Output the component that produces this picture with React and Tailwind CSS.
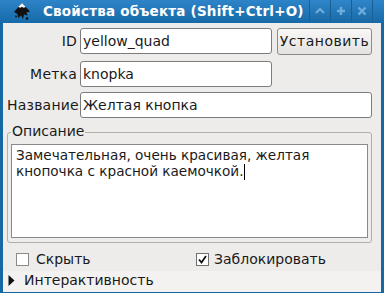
import React from "react";

const font = { fontFamily: '"DejaVu Sans", sans-serif' };

function Logo() {
  return (
    <svg width="18" height="19" viewBox="0 0 18 19">
      <path d="M9 1 L17 9.5 L13.5 10.5 L14.5 13.5 L11 12.5 L10 17 L8 13.5 L5 16 L4.5 12 L1 10 Z" fill="#111" />
      <path d="M9 1 L12.8 5 L10.5 5.8 L9 4.8 L7.5 5.8 L5.2 5 Z" fill="#f4f4f4" />
      <circle cx="14" cy="16.5" r="1.3" fill="#111" />
      <circle cx="3" cy="14.5" r="0.9" fill="#111" />
    </svg>
  );
}

function TitleButton({ children }) {
  return (
    <div className="w-[21px] h-[22px] flex items-center justify-center border-l border-[#1a5f94] bg-gradient-to-b from-[#2f86c8] to-[#1a6aa6]">
      {children}
    </div>
  );
}

export default function App() {
  return (
    <div className="w-[384px] h-[293px] bg-[#1668a3] flex flex-col text-[14px] text-[#1a1a1a]" style={font}>
      <div className="h-[23px] flex items-center bg-gradient-to-b from-[#2d84c8] to-[#166aa8] shrink-0">
        <div className="w-[43px] flex justify-center pl-[1px]">
          <Logo />
        </div>
        <div className="text-white font-bold text-[13.5px] tracking-[0.2px] flex-1">Свойства объекта (Shift+Ctrl+O)</div>
        <div className="flex self-start mr-[11px]">
          <TitleButton>
            <svg width="10" height="8" viewBox="0 0 10 8"><path d="M1 6 L5 2 L9 6" stroke="#6eacdc" strokeWidth="2.2" fill="none" /></svg>
          </TitleButton>
          <TitleButton>
            <svg width="10" height="10" viewBox="0 0 10 10"><path d="M5 1 V9 M1 5 H9" stroke="#6eacdc" strokeWidth="2.4" fill="none" /></svg>
          </TitleButton>
          <TitleButton>
            <svg width="10" height="10" viewBox="0 0 10 10"><path d="M1.5 1.5 L8.5 8.5 M8.5 1.5 L1.5 8.5" stroke="#6eacdc" strokeWidth="2.4" fill="none" /></svg>
          </TitleButton>
          <div className="w-px h-[22px] bg-[#1a5f94]" />
        </div>
      </div>
      <div className="flex-1 ml-[3px] mr-[3px] mb-[4px] bg-[#edeceb] flex flex-col">
        <div className="flex flex-col px-[4px] pt-[5px] flex-1">
          <div className="flex items-center h-[26px]">
            <div className="w-[73px] text-right pr-[3px] tracking-[0.2px]">ID</div>
            <div className="w-[192px] h-[26px] border border-[#7c7c7c] rounded-[3px] bg-white px-[2px] flex items-center">yellow_quad</div>
            <div className="ml-[5px] w-[95px] h-[27px] border border-[#8c8c8c] rounded-[3px] bg-gradient-to-b from-[#f9f8f7] to-[#e4e2e0] flex items-center justify-center tracking-[0.5px]">Установить</div>
          </div>
          <div className="flex items-center h-[26px] mt-[7px]">
            <div className="w-[73px] text-right pr-[3px] tracking-[0.2px]">Метка</div>
            <div className="w-[192px] h-[26px] border border-[#7c7c7c] rounded-[3px] bg-white px-[2px] flex items-center">knopka</div>
          </div>
          <div className="flex items-center h-[26px] mt-[5px]">
            <div className="w-[73px] text-right pr-[3px] tracking-[0.2px]">Название</div>
            <div className="w-[292px] h-[26px] border border-[#7c7c7c] rounded-[3px] bg-white px-[2px] flex items-center">Желтая кнопка</div>
          </div>
          <div className="relative mt-[14px] w-[365px] h-[111px] border border-[#b2b0ad] rounded-[3px] px-[3px] pt-[11px] pb-[4px]">
            <div className="absolute left-[3px] top-[-10px] bg-[#edeceb] px-px leading-[17px]">Описание</div>
            <div className="w-full h-full bg-white border border-[#8a8a8a] px-[4px] pt-[2px] leading-[16px] text-[13.6px]">
              Замечательная, очень красивая, желтая
              <br />
              кнопочка с красной каемочкой.<span className="inline-block w-px h-[16px] bg-black align-[-4px]" />
            </div>
          </div>
          <div className="flex items-center mt-[6px] h-[20px]">
            <div className="flex items-center w-[189px] pl-[9px]">
              <div className="w-[13px] h-[13px] border border-[#8a8a8a] bg-white mr-[7px]" />
              <span>Скрыть</span>
            </div>
            <div className="flex items-center">
              <div className="w-[13px] h-[13px] border border-[#6f6f6f] bg-white mr-[5px] flex items-center justify-center">
                <svg width="11" height="11" viewBox="0 0 11 11"><path d="M2 5.5 L4.5 8.5 L9 2" stroke="#111" strokeWidth="1.8" fill="none" /></svg>
              </div>
              <span>Заблокировать</span>
            </div>
          </div>
        </div>
        <div className="h-[21px] bg-[#f3f2f1] flex items-center pl-[5px] mt-[2px] pb-[2px]">
          <svg width="7" height="11" viewBox="0 0 7 11" className="mr-[9px]"><path d="M0.5 0 L6.5 5.5 L0.5 11 Z" fill="#111" /></svg>
          <span>Интерактивность</span>
        </div>
      </div>
    </div>
  );
}
